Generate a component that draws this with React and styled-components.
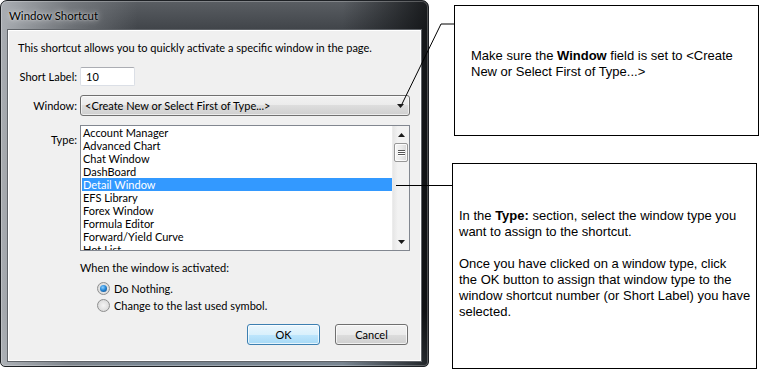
import React from 'react';
import styled, { createGlobalStyle } from 'styled-components';

const Global = createGlobalStyle`
  html, body { margin: 0; padding: 0; background: #fff; }
  body { width: 765px; height: 384px; overflow: hidden; }
  * { box-sizing: border-box; }
`;

const UI_FONT = `Lato, "Noto Sans", sans-serif`;

const Page = styled.div`
  position: relative;
  width: 765px;
  height: 384px;
  display: flex;
  align-items: flex-start;
  font-family: ${UI_FONT};
  font-size: 11px;
  color: #000;
`;

const Frame = styled.div`
  width: 429px;
  height: 367px;
  display: flex;
  flex-direction: column;
  padding: 0 6px 4px 6px;
  border: 1px solid #1d2024;
  border-radius: 7px 7px 5px 5px;
  box-shadow: inset 0 0 0 1px rgba(255, 255, 255, 0.25);
  background:
    linear-gradient(to right, rgba(175, 179, 184, 0.95) 0%, rgba(130, 134, 139, 0.7) 16%, rgba(40, 43, 47, 0) 32%, rgba(0, 0, 0, 0) 80%, rgba(10, 12, 14, 0.8) 100%),
    linear-gradient(to bottom, #5a5e63 0%, #404449 8%, #303337 40%, #24272b 85%, #7d8a96 100%);
`;

const TitleBar = styled.div`
  height: 28px;
  display: flex;
  align-items: center;
  padding-left: 2px;
  font-size: 11.5px;
  color: #000;
  text-shadow: 0 0 6px rgba(255, 255, 255, 0.9), 0 0 2px rgba(255, 255, 255, 0.6);
`;

const Client = styled.div`
  flex: 1;
  background: #f0f0f0;
  border: 1px solid #5f6368;
  box-shadow: inset 0 0 0 1px #ffffff;
  padding: 10px 13px 0 10px;
  display: flex;
  flex-direction: column;
`;

const Intro = styled.div`
  line-height: 16px;
  height: 16px;
  white-space: nowrap;
`;

const FormGrid = styled.div`
  margin-top: 11px;
  display: grid;
  grid-template-columns: 59px 330px;
  column-gap: 3px;
  row-gap: 9px;
`;

const Label = styled.div`
  text-align: right;
  white-space: nowrap;
  line-height: 16px;
  align-self: ${(p) => (p.$top ? 'start' : 'center')};
  padding-top: ${(p) => (p.$top ? '7px' : '0')};
`;

const TextBox = styled.div`
  width: 55px;
  height: 19px;
  background: #fff;
  border: 1px solid #dbdfe6;
  border-top-color: #abadb3;
  border-radius: 2px;
  padding-left: 5px;
  line-height: 17px;
`;

const Combo = styled.div`
  height: 21px;
  border: 1px solid #707070;
  border-radius: 3px;
  background: linear-gradient(to bottom, #f2f2f2 0%, #ebebeb 50%, #dddddd 50%, #cfcfcf 100%);
  box-shadow: inset 0 0 0 1px rgba(255, 255, 255, 0.6);
  display: flex;
  align-items: center;
  justify-content: space-between;
  padding: 0 5px 0 4px;
`;

const ListBox = styled.div`
  height: 126px;
  border: 1px solid #828790;
  background: #fff;
  display: flex;
  overflow: hidden;
`;

const Items = styled.div`
  flex: 1;
  overflow: hidden;
  display: flex;
  flex-direction: column;
`;

const Item = styled.div`
  flex: none;
  height: 13px;
  line-height: 13px;
  margin: 0 0 0 1px;
  padding-left: 1px;
  white-space: nowrap;
  background: ${(p) => (p.$selected ? '#3399ff' : 'transparent')};
  color: ${(p) => (p.$selected ? '#fff' : '#000')};
`;

const ScrollBar = styled.div`
  width: 17px;
  flex: none;
  background: linear-gradient(to right, #e6e6e6, #f2f2f2 30%, #f2f2f2);
  border-left: 1px solid #ececec;
  display: flex;
  flex-direction: column;
  align-items: center;
`;

const ScrollArrow = styled.div`
  height: 17px;
  width: 100%;
  display: flex;
  align-items: center;
  justify-content: center;
`;

const Thumb = styled.div`
  width: 14px;
  height: 19px;
  border: 1px solid #979797;
  border-radius: 2px;
  background: linear-gradient(to right, #f6f6f6 0%, #ececec 50%, #d8d8d8 100%);
  box-shadow: inset 0 0 0 1px rgba(255, 255, 255, 0.8);
  display: flex;
  flex-direction: column;
  align-items: center;
  justify-content: center;
  gap: 1px;
`;

const Grip = styled.div`
  width: 7px;
  height: 1px;
  background: #555;
  box-shadow: 0 1px 0 #fff;
`;

const Track = styled.div`
  flex: 1;
`;

const Options = styled.div`
  display: flex;
  flex-direction: column;
`;

const OptionsTitle = styled.div`
  line-height: 16px;
  margin-bottom: 4px;
`;

const RadioRow = styled.div`
  height: 17px;
  display: flex;
  align-items: center;
  gap: 4px;
  padding-left: 17px;
`;

const RadioCircle = styled.span`
  width: 13px;
  height: 13px;
  border-radius: 50%;
  border: 1px solid #8e8f8f;
  background: radial-gradient(circle at 50% 50%, #f4f4f4 0%, #e0e0e0 60%, #cfcfcf 100%);
  display: flex;
  align-items: center;
  justify-content: center;
  &::after {
    content: '';
    display: ${(p) => (p.$checked ? 'block' : 'none')};
    width: 7px;
    height: 7px;
    border-radius: 50%;
    background: radial-gradient(circle at 40% 35%, #8fd0ff 0%, #2a8ad8 45%, #0b3f7a 100%);
  }
`;

const ButtonRow = styled.div`
  margin-top: 10px;
  display: flex;
  justify-content: flex-end;
  gap: 15px;
`;

const Button = styled.div`
  width: 73px;
  height: 21px;
  border-radius: 3px;
  border: 1px solid ${(p) => (p.$default ? '#3c7fb1' : '#707070')};
  background: ${(p) =>
    p.$default
      ? 'linear-gradient(to bottom, #eaf6fd 0%, #d9f0fc 50%, #bee6fd 50%, #a7d9f5 100%)'
      : 'linear-gradient(to bottom, #f2f2f2 0%, #ebebeb 50%, #dddddd 50%, #cfcfcf 100%)'};
  box-shadow: inset 0 0 0 1px rgba(255, 255, 255, 0.7);
  display: flex;
  align-items: center;
  justify-content: center;
  line-height: 16px;
`;

const CalloutColumn = styled.div`
  display: flex;
  flex-direction: column;
  font-family: "Liberation Sans", Arial, sans-serif;
  font-size: 13px;
  line-height: 16px;
  color: #000;
`;

const Callout = styled.div`
  width: 305px;
  height: ${(p) => p.$h}px;
  margin-left: ${(p) => p.$left}px;
  margin-top: ${(p) => p.$top}px;
  border: 1px solid #000;
  background: #fff;
  padding: ${(p) => p.$pad};
`;

const Para = styled.p`
  margin: 0 0 16px 0;
  white-space: nowrap;
  &:last-child { margin-bottom: 0; }
`;

const Leaders = styled.svg`
  position: absolute;
  left: 0;
  top: 0;
  pointer-events: none;
`;

const Arrow = ({ down }) => (
  <svg width="7" height="4" viewBox="0 0 7 4">
    <polygon points={down ? '0,0 7,0 3.5,4' : '0,4 7,4 3.5,0'} fill="#1a1a1a" />
  </svg>
);

const items = [
  'Account Manager',
  'Advanced Chart',
  'Chat Window',
  'DashBoard',
  'Detail Window',
  'EFS Library',
  'Forex Window',
  'Formula Editor',
  'Forward/Yield Curve',
  'Hot List',
];

export default function App() {
  return (
    <>
      <Global />
      <Page>
        <Frame>
          <TitleBar>Window Shortcut</TitleBar>
          <Client>
            <Intro>This shortcut allows you to quickly activate a specific window in the page.</Intro>
            <FormGrid>
              <Label>Short Label:</Label>
              <TextBox>10</TextBox>
              <Label>Window:</Label>
              <Combo>
                <span>&lt;Create New or Select First of Type...&gt;</span>
                <Arrow down />
              </Combo>
              <Label $top>Type:</Label>
              <ListBox>
                <Items>
                  {items.map((it) => (
                    <Item key={it} $selected={it === 'Detail Window'}>
                      {it}
                    </Item>
                  ))}
                </Items>
                <ScrollBar>
                  <ScrollArrow>
                    <Arrow />
                  </ScrollArrow>
                  <Thumb>
                    <Grip />
                    <Grip />
                    <Grip />
                  </Thumb>
                  <Track />
                  <ScrollArrow>
                    <Arrow down />
                  </ScrollArrow>
                </ScrollBar>
              </ListBox>
              <span />
              <Options>
                <OptionsTitle>When the window is activated:</OptionsTitle>
                <RadioRow>
                  <RadioCircle $checked />
                  <span>Do Nothing.</span>
                </RadioRow>
                <RadioRow>
                  <RadioCircle />
                  <span>Change to the last used symbol.</span>
                </RadioRow>
              </Options>
            </FormGrid>
            <ButtonRow>
              <Button $default>OK</Button>
              <Button>Cancel</Button>
            </ButtonRow>
          </Client>
        </Frame>
        <CalloutColumn>
          <Callout $h={131} $left={25} $top={5} $pad="42px 8px 0 16px">
            <Para>
              Make sure the <b>Window</b> field is set to &lt;Create
              <br />
              New or Select First of Type...&gt;
            </Para>
          </Callout>
          <Callout $h={206} $left={23} $top={27} $pad="44px 6px 0 6px">
            <Para>
              In the <b>Type:</b> section, select the window type you
              <br />
              want to assign to the shortcut.
            </Para>
            <Para>
              Once you have clicked on a window type, click
              <br />
              the OK button to assign that window type to the
              <br />
              window shortcut number (or Short Label) you have
              <br />
              selected.
            </Para>
          </Callout>
        </CalloutColumn>
        <Leaders width="765" height="384" viewBox="0 0 765 384">
          <polyline points="402,104 441,24 454,24" fill="none" stroke="#000" strokeWidth="1" />
          <line x1="396" y1="185.5" x2="452" y2="185.5" stroke="#000" strokeWidth="1" />
        </Leaders>
      </Page>
    </>
  );
}
